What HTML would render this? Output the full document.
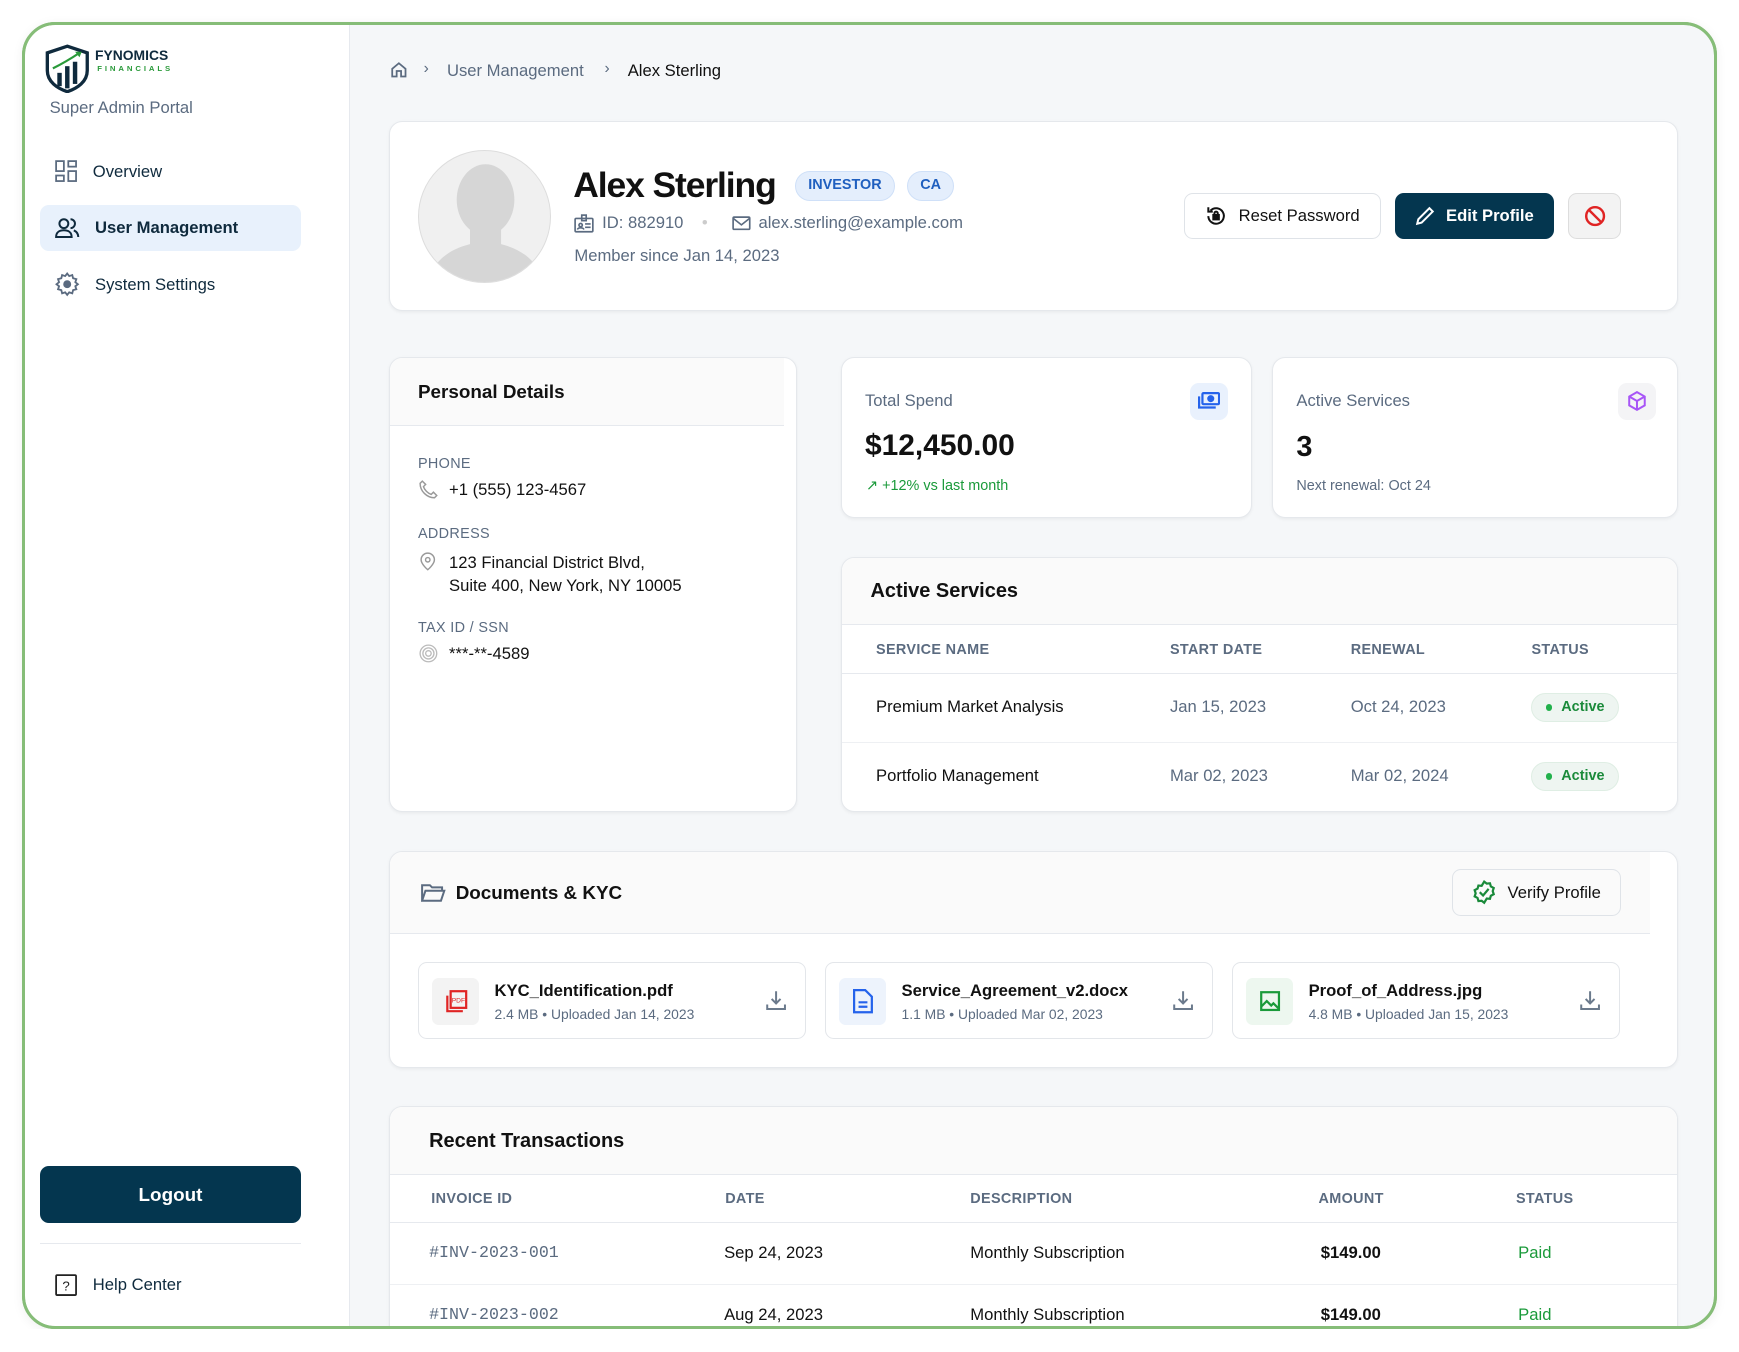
<!DOCTYPE html>
<html><head><meta charset="utf-8"><style>
*{box-sizing:border-box;margin:0;padding:0}
html,body{width:1739px;height:1352px;overflow:hidden;background:#fff}
body{font-family:"Liberation Sans",sans-serif;color:#111}
#z{zoom:1.10906;width:1568px;height:1219px;position:relative}
.frame{position:absolute;left:20px;top:20px;width:1528px;height:1178px;border:3px solid #86bd78;border-radius:30px;overflow:hidden;background:#f5f7f9;box-shadow:0 2px 10px rgba(0,0,0,.06)}
.side{position:absolute;left:-3px;top:0;width:296px;height:100%;background:#fff;border-right:1px solid #e6e9ee}
.a{position:absolute}
.card{position:absolute;background:#fff;border:1px solid #e5e8ec;border-radius:12px;box-shadow:0 1px 3px rgba(0,0,0,.05);overflow:hidden}
.muted{color:#5b6b80}
.lbl{font-size:13px;color:#5b6b80;letter-spacing:.3px}
.th{font-size:13px;font-weight:bold;color:#5b6b80;letter-spacing:.3px}
.nav{position:absolute;left:16px;width:236px;height:42px;border-radius:8px;font-size:15px;display:flex;align-items:center;padding-left:14px;gap:14px;color:#0f2a3d}
.btn{position:absolute;border-radius:8px;display:flex;align-items:center;justify-content:center;gap:10px;font-size:15px}
.pill{position:absolute;background:#eef5f1;border:1px solid #dfeee4;border-radius:14px;color:#1a8a3a;font-weight:bold;font-size:13px;display:flex;align-items:center;gap:8px;padding:0 12px;height:26px}
.pill:before{content:"";width:6px;height:6px;border-radius:50%;background:#22b14c}
.doc{position:absolute;top:867px;width:350px;height:70px;background:#fff;border:1px solid #e3e6ea;border-radius:8px}
.doc .ic{position:absolute;left:12px;top:14px;width:42px;height:42px;border-radius:6px;display:flex;align-items:center;justify-content:center}
.doc .n{position:absolute;left:68px;top:17px;font-size:15px;font-weight:bold;color:#111}
.doc .m{position:absolute;left:68px;top:39px;font-size:12.5px;color:#5b6b80}
.doc .dl{position:absolute;right:16px;top:24px}
.hdr{background:#fafafa;border-bottom:1px solid #e6e9ee}
</style></head><body><div id="z">
<div class="frame">
<div class="side">
 <svg class="a" style="left:20px;top:17px" width="42" height="44" viewBox="0 0 42 44"><path d="M21 2 L39 8 V24 C39 34 30 40 21 43 C12 40 3 34 3 24 V8 Z" fill="none" stroke="#0f2a3d" stroke-width="3"/><rect x="12" y="26" width="4" height="12" fill="#0f2a3d"/><rect x="19" y="20" width="4" height="20" fill="#0f2a3d"/><rect x="26" y="16" width="4" height="20" fill="#0f2a3d"/><path d="M8 22 Q20 16 32 8" stroke="#2a9a3a" stroke-width="2" fill="none"/><path d="M28 7 L34 7 L32 12" fill="#2a9a3a"/></svg>
 <div class="a" style="left:66px;top:20px;font-size:12.5px;font-weight:bold;color:#0f2a3d">FYNOMICS</div>
 <div class="a" style="left:68px;top:35px;font-size:7px;letter-spacing:2.6px;color:#2a9a3a;font-weight:bold">FINANCIALS</div>
 <div class="a muted" style="left:25px;top:66px;font-size:15px">Super Admin Portal</div>
 <div class="nav" style="top:111px"><svg width="20" height="20" viewBox="0 0 20 20" fill="none" stroke="#5b6b80" stroke-width="1.6"><rect x="1" y="1" width="7" height="9"/><rect x="12" y="1" width="7" height="5"/><rect x="1" y="14" width="7" height="5"/><rect x="12" y="10" width="7" height="9"/></svg>Overview</div>
 <div class="nav" style="top:162px;background:#e8f1fc;font-weight:bold"><svg width="22" height="20" viewBox="0 0 22 20" fill="none" stroke="#0f2a3d" stroke-width="1.8"><circle cx="8" cy="6" r="4"/><path d="M1 18c0-4 3-6 7-6s7 2 7 6z"/><path d="M14 2a4 4 0 010 8M17 12c2 1 4 3 4 6"/></svg>User Management</div>
 <div class="nav" style="top:213px"><svg width="22" height="22" viewBox="0 0 24 24" fill="none" stroke="#5b6b80" stroke-width="1.8"><circle cx="12" cy="12" r="3" fill="#5b6b80"/><path d="M12 1.5l2 2.5 3-1 .8 3.2 3.2.8-1 3 2.5 2-2.5 2 1 3-3.2.8-.8 3.2-3-1-2 2.5-2-2.5-3 1-.8-3.2-3.2-.8 1-3L1.5 12 4 10l-1-3 3.2-.8L7 3l3 1z"/></svg>System Settings</div>
 <div class="btn" style="left:16px;top:1029px;width:236px;height:51px;background:#04364f;color:#fff;font-size:17px;font-weight:bold">Logout</div>
 <div class="a" style="left:16px;top:1098px;width:236px;border-top:1px solid #e6e9ee"></div>
 <div class="nav" style="top:1115px"><svg width="20" height="20" viewBox="0 0 20 20" fill="none" stroke="#222" stroke-width="1.6"><rect x="1" y="1" width="18" height="18" rx="1"/><text x="10" y="15" font-size="12" text-anchor="middle" fill="#222" stroke="none" font-family="Liberation Sans">?</text></svg>Help Center</div>
</div>
</div>
<!-- main -->
<svg class="a" style="left:352px;top:55px" width="16" height="16" viewBox="0 0 16 16" fill="none" stroke="#5b6b80" stroke-width="1.6"><path d="M2 7L8 2l6 5v7H10V9H6v5H2z"/></svg>
<div class="a muted" style="left:382px;top:54px;font-size:14px">›</div>
<div class="a muted" style="left:403px;top:55px;font-size:15px">User Management</div>
<div class="a muted" style="left:545px;top:54px;font-size:14px">›</div>
<div class="a" style="left:566px;top:55px;font-size:15px">Alex Sterling</div>

<div class="card" style="left:351px;top:109px;width:1162px;height:171px">
 <div class="a" style="left:25px;top:25px;width:120px;height:120px;border-radius:50%;background:#f0f0f0;border:1px solid #ddd;overflow:hidden"><svg width="120" height="120" viewBox="0 0 120 120"><ellipse cx="60" cy="44" rx="26" ry="32" fill="#d6d6d6"/><path d="M46 70 L46 84 C30 88 18 96 12 108 L12 120 L108 120 L108 108 C102 96 90 88 74 84 L74 70z" fill="#d6d6d6"/></svg></div>
 <div class="a" style="left:165px;top:39px;font-size:32px;font-weight:bold;letter-spacing:-1px">Alex Sterling</div>
 <div class="a" style="left:365px;top:44px;height:27px;padding:0 11px;border-radius:14px;background:#e4eefc;border:1px solid #cfe0f8;color:#1f5fbf;font-weight:bold;font-size:13px;line-height:25px">INVESTOR</div>
 <div class="a" style="left:466px;top:44px;height:27px;padding:0 11px;border-radius:14px;background:#e4eefc;border:1px solid #cfe0f8;color:#1f5fbf;font-weight:bold;font-size:13px;line-height:25px">CA</div>
 <svg class="a" style="left:166px;top:83px" width="18" height="17" viewBox="0 0 18 17" fill="none" stroke="#5b6b80" stroke-width="1.5"><rect x="1" y="4" width="16" height="12" rx="1"/><rect x="7" y="1" width="4" height="5"/><circle cx="6" cy="10" r="1.5"/><path d="M10 9h5M10 12h5M3 14c1-2 5-2 6 0"/></svg>
 <div class="a muted" style="left:191px;top:82px;font-size:15px">ID: 882910</div>
 <div class="a" style="left:281px;top:82px;font-size:15px;color:#ccc">•</div>
 <svg class="a" style="left:308px;top:85px" width="17" height="13" viewBox="0 0 17 13" fill="none" stroke="#5b6b80" stroke-width="1.5"><rect x="1" y="1" width="15" height="11" rx="1"/><path d="M1 2l7.5 6L16 2"/></svg>
 <div class="a muted" style="left:332px;top:82px;font-size:15px">alex.sterling@example.com</div>
 <div class="a muted" style="left:166px;top:112px;font-size:15px">Member since Jan 14, 2023</div>
 <div class="btn" style="left:716px;top:64px;width:177px;height:42px;border:1px solid #dfe3e8;background:#fff"><svg width="20" height="20" viewBox="0 0 20 20" fill="none" stroke="#111" stroke-width="1.8"><path d="M3 10a7 7 0 1 0 2-5M3 2v4h4"/><rect x="7.5" y="9" width="5" height="4" fill="#111"/><path d="M8.5 9V7.5a1.5 1.5 0 013 0V9"/></svg>Reset Password</div>
 <div class="btn" style="left:906px;top:64px;width:143px;height:42px;background:#04364f;color:#fff;font-weight:bold"><svg width="18" height="18" viewBox="0 0 18 18" fill="none" stroke="#fff" stroke-width="1.8"><path d="M2 16l1-4L13 2l3 3L6 15z"/></svg>Edit Profile</div>
 <div class="btn" style="left:1062px;top:64px;width:48px;height:42px;background:#f3f3f3;border:1px solid #ddd"><svg width="20" height="20" viewBox="0 0 20 20" fill="none" stroke="#e02424" stroke-width="2.2"><circle cx="10" cy="10" r="8"/><path d="M4.5 4.5l11 11"/></svg></div>
</div>

<div class="card" style="left:351px;top:322px;width:368px;height:410px">
 <div class="a hdr" style="left:0;top:0;width:355px;height:61px"></div>
 <div class="a" style="left:25px;top:21px;font-size:17px;font-weight:bold">Personal Details</div>
 <div class="a lbl" style="left:25px;top:88px">PHONE</div>
 <svg class="a" style="left:26px;top:110px" width="17" height="17" viewBox="0 0 17 17" fill="none" stroke="#999" stroke-width="1.3"><path d="M3 1l3 3-2 2c1 3 4 6 7 7l2-2 3 3-2 2C7 16 1 10 1 3z"/></svg>
 <div class="a" style="left:53px;top:110px;font-size:15px">+1 (555) 123-4567</div>
 <div class="a lbl" style="left:25px;top:151px">ADDRESS</div>
 <svg class="a" style="left:27px;top:175px" width="14" height="17" viewBox="0 0 14 17" fill="none" stroke="#999" stroke-width="1.3"><path d="M7 16s6-5 6-9A6 6 0 001 7c0 4 6 9 6 9z"/><circle cx="7" cy="7" r="2"/></svg>
 <div class="a" style="left:53px;top:174px;font-size:15px;line-height:21px">123 Financial District Blvd,<br>Suite 400, New York, NY 10005</div>
 <div class="a lbl" style="left:25px;top:236px">TAX ID / SSN</div>
 <svg class="a" style="left:26px;top:258px" width="17" height="17" viewBox="0 0 17 17" fill="none" stroke="#bbb" stroke-width="1.2"><circle cx="8.5" cy="8.5" r="7.5"/><circle cx="8.5" cy="8.5" r="5"/><circle cx="8.5" cy="8.5" r="2.5"/></svg>
 <div class="a" style="left:53px;top:258px;font-size:15px">***-**-4589</div>
</div>

<div class="card" style="left:758px;top:322px;width:371px;height:145px">
 <div class="a muted" style="left:21px;top:30px;font-size:15px">Total Spend</div>
 <div class="a" style="left:314px;top:22px;width:34px;height:34px;border-radius:8px;background:#e9f1fd;display:flex;align-items:center;justify-content:center"><svg width="20" height="16" viewBox="0 0 20 16" fill="none" stroke="#2563eb" stroke-width="2"><rect x="4" y="1" width="15" height="10" rx="1"/><circle cx="11.5" cy="6" r="2.2" fill="#2563eb"/><path d="M1 4v10h15"/></svg></div>
 <div class="a" style="left:21px;top:64px;font-size:27px;font-weight:bold">$12,450.00</div>
 <div class="a" style="left:22px;top:108px;font-size:13px;color:#1a9a3a">↗ +12% vs last month</div>
</div>
<div class="card" style="left:1147px;top:322px;width:366px;height:145px">
 <div class="a muted" style="left:21px;top:30px;font-size:15px">Active Services</div>
 <div class="a" style="left:311px;top:22px;width:34px;height:34px;border-radius:8px;background:#f4f4f6;display:flex;align-items:center;justify-content:center"><svg width="18" height="18" viewBox="0 0 18 18" fill="none" stroke="#a855f7" stroke-width="1.8"><path d="M9 1l7 4v8l-7 4-7-4V5zM2 5l7 4 7-4M9 9v8"/></svg></div>
 <div class="a" style="left:21px;top:66px;font-size:26px;font-weight:bold">3</div>
 <div class="a muted" style="left:21px;top:108px;font-size:13px">Next renewal: Oct 24</div>
</div>

<div class="card" style="left:758px;top:502px;width:755px;height:230px">
 <div class="a hdr" style="left:0;top:0;width:100%;height:61px"></div>
 <div class="a" style="left:26px;top:20px;font-size:18px;font-weight:bold">Active Services</div>
 <div class="a th" style="left:31px;top:76px">SERVICE NAME</div>
 <div class="a th" style="left:296px;top:76px">START DATE</div>
 <div class="a th" style="left:459px;top:76px">RENEWAL</div>
 <div class="a th" style="left:622px;top:76px">STATUS</div>
 <div class="a" style="left:0;top:104px;width:100%;border-top:1px solid #e6e9ee"></div>
 <div class="a" style="left:31px;top:126px;font-size:15px">Premium Market Analysis</div>
 <div class="a muted" style="left:296px;top:126px;font-size:15px">Jan 15, 2023</div>
 <div class="a muted" style="left:459px;top:126px;font-size:15px">Oct 24, 2023</div>
 <div class="pill" style="left:622px;top:122px">Active</div>
 <div class="a" style="left:0;top:166px;width:100%;border-top:1px solid #eef0f3"></div>
 <div class="a" style="left:31px;top:188px;font-size:15px">Portfolio Management</div>
 <div class="a muted" style="left:296px;top:188px;font-size:15px">Mar 02, 2023</div>
 <div class="a muted" style="left:459px;top:188px;font-size:15px">Mar 02, 2024</div>
 <div class="pill" style="left:622px;top:184px">Active</div>
</div>

<div class="card" style="left:351px;top:767px;width:1162px;height:196px">
 <div class="a hdr" style="left:0;top:0;width:1136px;height:74px"></div>
 <svg class="a" style="left:28px;top:28px" width="22" height="18" viewBox="0 0 22 18" fill="none" stroke="#5b6b80" stroke-width="1.8"><path d="M1 16V2h7l2 2h9v3M1 16l3-9h17l-3 9z"/></svg>
 <div class="a" style="left:59px;top:27px;font-size:17px;font-weight:bold">Documents &amp; KYC</div>
 <div class="btn" style="left:957px;top:16px;width:153px;height:42px;border:1px solid #dfe3e8;background:#fafafa"><svg width="22" height="22" viewBox="0 0 22 22" fill="none" stroke="#1a8a3a" stroke-width="2"><path d="M11 1.5l2.3 1.8 2.9-.3.8 2.8 2.6 1.4-.9 2.8.9 2.8-2.6 1.4-.8 2.8-2.9-.3L11 20.5l-2.3-1.8-2.9.3-.8-2.8-2.6-1.4.9-2.8-.9-2.8 2.6-1.4.8-2.8 2.9.3z"/><path d="M7 11l3 3 5-6"/></svg>Verify Profile</div>
</div>
<div class="doc" style="left:377px"><div class="ic" style="background:#f3f3f3"><svg width="22" height="22" viewBox="0 0 22 22" fill="none" stroke="#e02424" stroke-width="2"><rect x="6" y="2" width="14" height="15"/><path d="M3 6v14h14"/><text x="13" y="12" font-size="6" fill="#e02424" stroke="none" text-anchor="middle" font-family="Liberation Sans">PDF</text></svg></div><div class="n">KYC_Identification.pdf</div><div class="m">2.4 MB • Uploaded Jan 14, 2023</div><svg class="dl" width="20" height="20" viewBox="0 0 20 20" fill="none" stroke="#6b7a8c" stroke-width="1.8"><path d="M10 2v11M6 9l4 4 4-4M2 14v4h16v-4"/></svg></div>
<div class="doc" style="left:744px"><div class="ic" style="background:#edf3fc"><svg width="18" height="22" viewBox="0 0 18 22" fill="none" stroke="#2563eb" stroke-width="2"><path d="M1 1h10l6 6v14H1z"/><path d="M5 12h8M5 16h8"/></svg></div><div class="n">Service_Agreement_v2.docx</div><div class="m">1.1 MB • Uploaded Mar 02, 2023</div><svg class="dl" width="20" height="20" viewBox="0 0 20 20" fill="none" stroke="#6b7a8c" stroke-width="1.8"><path d="M10 2v11M6 9l4 4 4-4M2 14v4h16v-4"/></svg></div>
<div class="doc" style="left:1111px"><div class="ic" style="background:#edf7ef"><svg width="20" height="20" viewBox="0 0 20 20" fill="none" stroke="#1a9a3a" stroke-width="2"><rect x="2" y="2" width="16" height="16"/><path d="M2 15l5-5 4 4 2-2 5 5"/></svg></div><div class="n">Proof_of_Address.jpg</div><div class="m">4.8 MB • Uploaded Jan 15, 2023</div><svg class="dl" width="20" height="20" viewBox="0 0 20 20" fill="none" stroke="#6b7a8c" stroke-width="1.8"><path d="M10 2v11M6 9l4 4 4-4M2 14v4h16v-4"/></svg></div>

<div class="card" style="left:351px;top:997px;width:1162px;height:210px;border-bottom:none">
 <div class="a hdr" style="left:0;top:0;width:100%;height:62px"></div>
 <div class="a" style="left:35px;top:21px;font-size:18px;font-weight:bold">Recent Transactions</div>
 <div class="a th" style="left:37px;top:76px">INVOICE ID</div>
 <div class="a th" style="left:302px;top:76px">DATE</div>
 <div class="a th" style="left:523px;top:76px">DESCRIPTION</div>
 <div class="a th" style="left:837px;top:76px">AMOUNT</div>
 <div class="a th" style="left:1015px;top:76px">STATUS</div>
 <div class="a" style="left:0;top:104px;width:100%;border-top:1px solid #e6e9ee"></div>
 <div class="a muted" style="left:35px;top:123px;font-size:15px;font-family:'Liberation Mono',monospace">#INV-2023-001</div>
 <div class="a" style="left:301px;top:123px;font-size:15px">Sep 24, 2023</div>
 <div class="a" style="left:523px;top:123px;font-size:15px">Monthly Subscription</div>
 <div class="a" style="left:839px;top:123px;font-size:15px;font-weight:bold">$149.00</div>
 <div class="a" style="left:1017px;top:123px;font-size:15px;color:#1a9a3a">Paid</div>
 <div class="a" style="left:0;top:160px;width:100%;border-top:1px solid #eef0f3"></div>
 <div class="a muted" style="left:35px;top:179px;font-size:15px;font-family:'Liberation Mono',monospace">#INV-2023-002</div>
 <div class="a" style="left:301px;top:179px;font-size:15px">Aug 24, 2023</div>
 <div class="a" style="left:523px;top:179px;font-size:15px">Monthly Subscription</div>
 <div class="a" style="left:839px;top:179px;font-size:15px;font-weight:bold">$149.00</div>
 <div class="a" style="left:1017px;top:179px;font-size:15px;color:#1a9a3a">Paid</div>
</div>
<div class="a" style="left:0;top:1198px;width:1568px;height:21px;background:#fff"></div>
<div class="a" style="left:20px;top:20px;width:1528px;height:1178px;border:3px solid #86bd78;border-radius:30px;pointer-events:none"></div>
</div></body></html>
